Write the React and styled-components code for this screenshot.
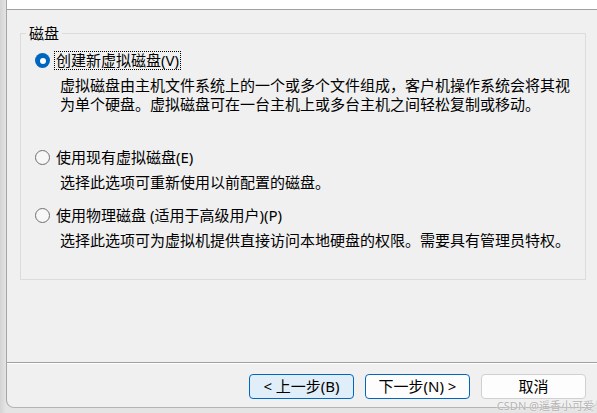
import styled, { createGlobalStyle } from 'styled-components';

const GlobalStyle = createGlobalStyle`
  html, body {
    margin: 0;
    padding: 0;
  }
  body {
    background: #e2e2e2;
    font-family: "Noto Sans", "Noto Sans CJK SC", sans-serif;
  }
  * {
    box-sizing: border-box;
  }
`;

// 바깥 배경 (창 그림자 영역)
const Screen = styled.div`
  position: relative;
  display: flex;
  width: 597px;
  height: 413px;
  padding-left: 6px;
  background: linear-gradient(to right, #d4d4d4, #e4e4e4 6px);
  overflow: hidden;
`;

const Window = styled.div`
  display: flex;
  flex-direction: column;
  flex: 1;
  height: 408px;
  background: #f0f0f0;
  border-left: 1px solid #a6a6a6;
  border-bottom: 1px solid #b4b4b4;
  border-radius: 0 0 8px 8px;
  overflow: hidden;
`;

const Header = styled.div`
  height: 10px;
  background: #fff;
  border-bottom: 1px solid #a0a0a0;
`;

const Body = styled.div`
  flex: 1;
  padding: 14px 11px 0 13px;
`;

// 그룹 박스
const Group = styled.fieldset`
  margin: 0;
  padding: 8px 0 0 0;
  height: 256px;
  border: 1px solid #dcdcdc;
`;

const Legend = styled.legend`
  margin-left: 5px;
  padding: 0 3px;
  font-size: 15px;
  line-height: 19px;
  color: #000;
`;

const Option = styled.div`
  margin-top: ${(p) => p.$gap || 0}px;
`;

const OptionRow = styled.div`
  display: flex;
  align-items: center;
  height: 19px;
  padding-left: 14px;
`;

const Radio = styled.span`
  position: relative;
  width: 15px;
  height: 15px;
  border-radius: 50%;
  flex-shrink: 0;
  background: ${(p) => (p.$checked ? '#0067c0' : '#f7f7f7')};
  border: ${(p) => (p.$checked ? 'none' : '1px solid #6f6f6f')};
  &::after {
    content: '';
    display: ${(p) => (p.$checked ? 'block' : 'none')};
    position: absolute;
    left: 4.5px;
    top: 4.5px;
    width: 6px;
    height: 6px;
    border-radius: 50%;
    background: #fff;
  }
`;

const Label = styled.span`
  margin-left: 4px;
  padding: 0 1px;
  font-size: 15px;
  line-height: 17px;
  color: #000;
  white-space: nowrap;
  border: 1px dotted ${(p) => (p.$focused ? '#000' : 'transparent')};
`;

const Desc = styled.p`
  margin: 6px 0 0;
  padding-left: 39px;
  max-width: 555px;
  font-size: 15px;
  line-height: 19px;
  color: #000;
`;

// 하단 버튼 영역
const Footer = styled.div`
  display: flex;
  justify-content: flex-end;
  gap: 11px;
  height: 45px;
  padding: 11px 11px 0 0;
  border-top: 1px solid #a0a0a0;
  box-shadow: inset 0 1px #fff;
`;

const Button = styled.button`
  width: 105px;
  height: 25px;
  padding: 0;
  font-family: inherit;
  font-size: 15px;
  line-height: 23px;
  color: #000;
  border-radius: 4px;
  border: 1px solid ${(p) => (p.$variant === 'plain' ? '#d0d0d0' : '#0067c0')};
  background: ${(p) => (p.$variant === 'hover' ? '#e0eef9' : '#fdfdfd')};
`;

const Watermark = styled.div`
  position: absolute;
  right: 3px;
  bottom: 1px;
  font-size: 11px;
  line-height: 13px;
  color: #b4b4b4;
  text-shadow: 0 0 2px #fff;
  white-space: nowrap;
`;

const options = [
  {
    label: '创建新虚拟磁盘(V)',
    desc: '虚拟磁盘由主机文件系统上的一个或多个文件组成，客户机操作系统会将其视为单个硬盘。虚拟磁盘可在一台主机上或多台主机之间轻松复制或移动。',
    checked: true,
    gap: 0,
  },
  {
    label: '使用现有虚拟磁盘(E)',
    desc: '选择此选项可重新使用以前配置的磁盘。',
    gap: 34,
  },
  {
    label: '使用物理磁盘 (适用于高级用户)(P)',
    desc: '选择此选项可为虚拟机提供直接访问本地硬盘的权限。需要具有管理员特权。',
    gap: 14,
  },
];

const App = () => {
  return (
    <>
      <GlobalStyle />
      <Screen>
        <Window>
          <Header />
          <Body>
            <Group>
              <Legend>磁盘</Legend>
              {options.map((o) => (
                <Option key={o.label} $gap={o.gap}>
                  <OptionRow>
                    <Radio $checked={o.checked} />
                    <Label $focused={o.checked}>{o.label}</Label>
                  </OptionRow>
                  <Desc>{o.desc}</Desc>
                </Option>
              ))}
            </Group>
          </Body>
          <Footer>
            <Button $variant='hover'>&lt; 上一步(B)</Button>
            <Button>下一步(N) &gt;</Button>
            <Button $variant='plain'>取消</Button>
          </Footer>
        </Window>
        <Watermark>CSDN @遥香小可爱</Watermark>
      </Screen>
    </>
  );
};

export default App;
